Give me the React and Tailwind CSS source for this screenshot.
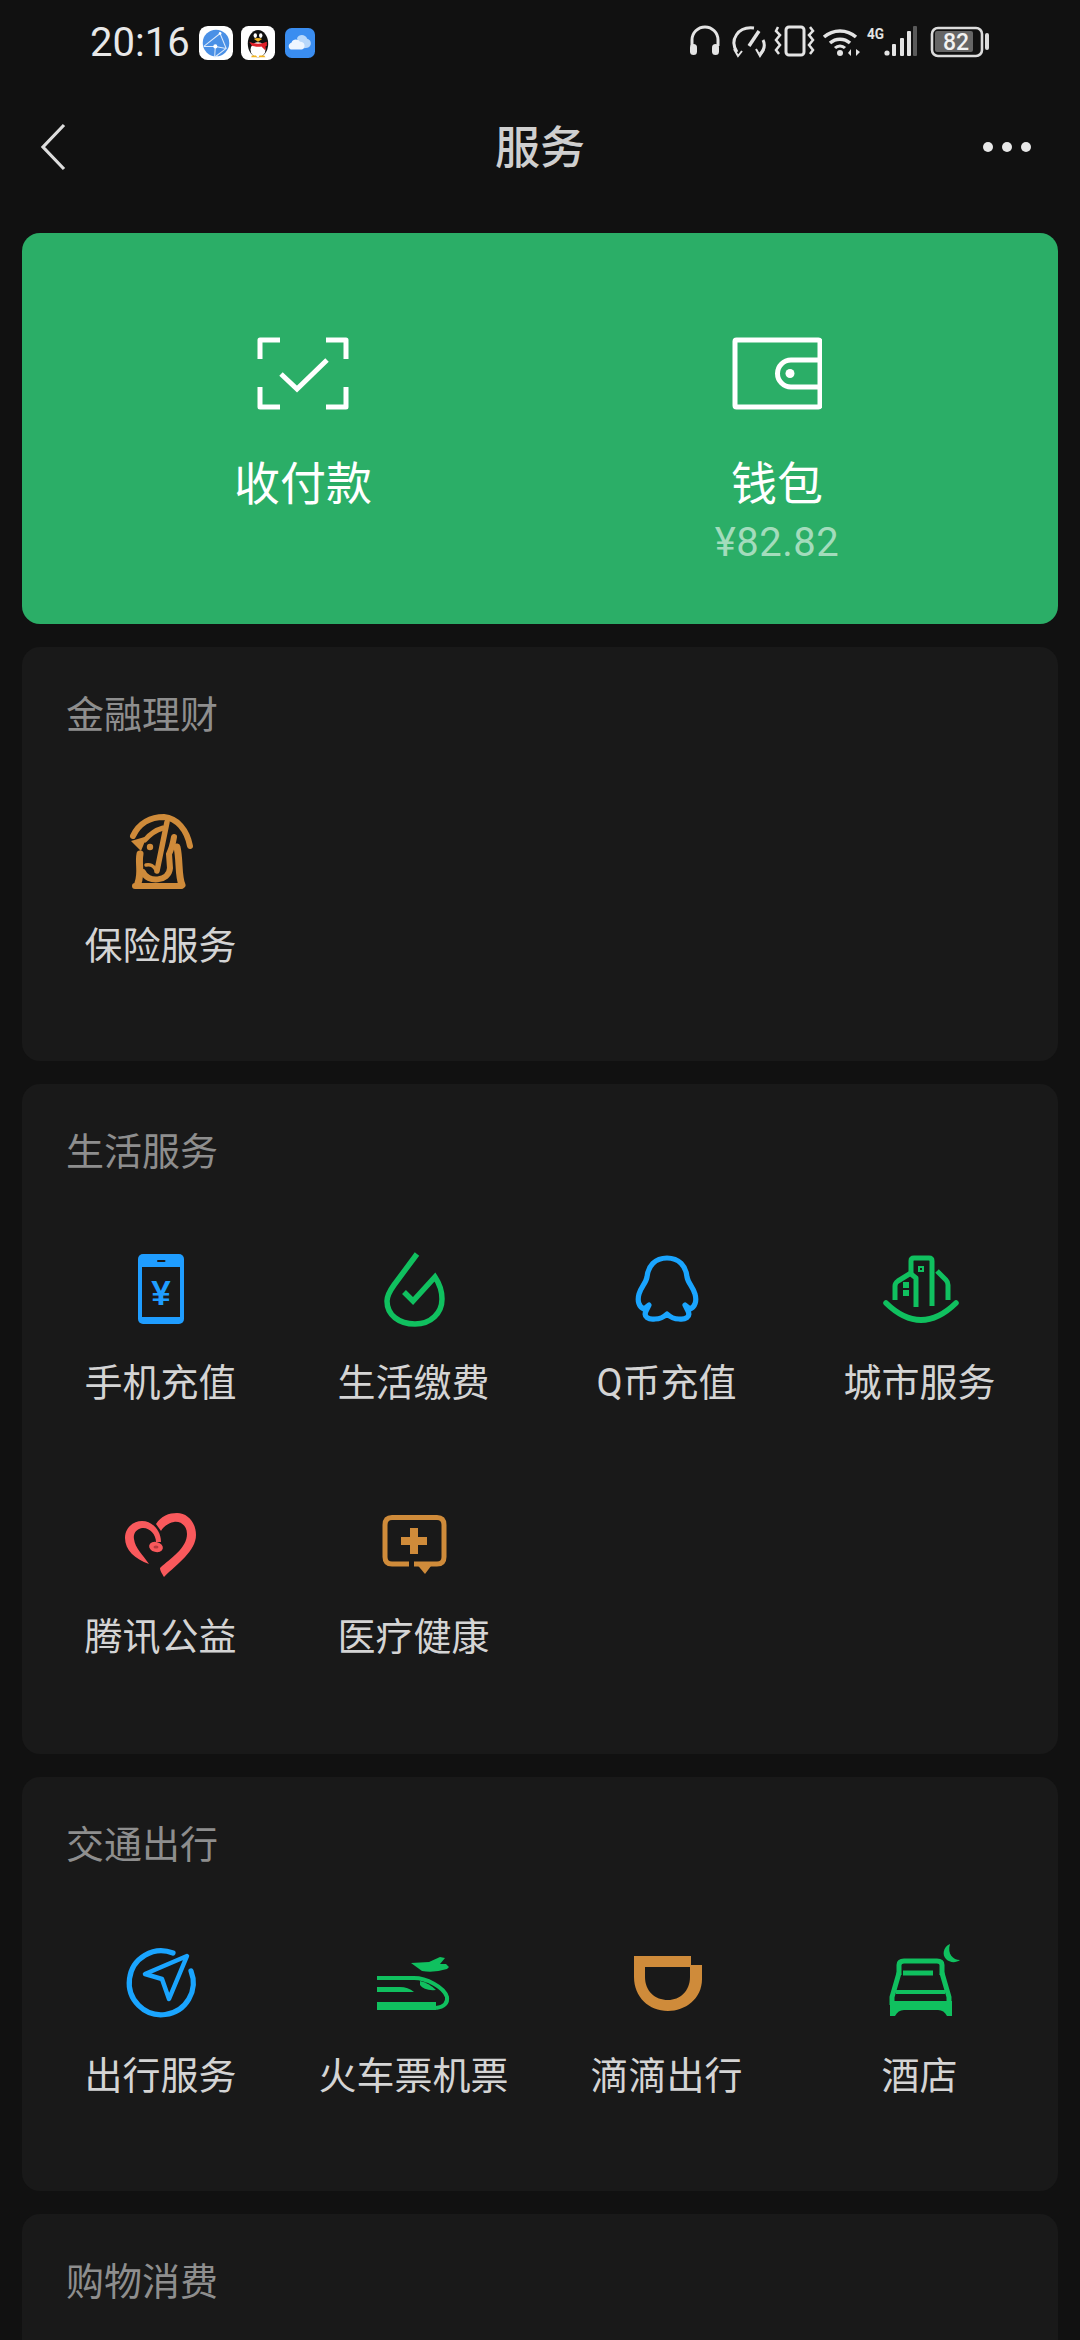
import React from "react";

const BLUE = "#1aa5ff";
const GREEN = "#10c05f";
const ORANGE = "#cf8b3a";
const RED = "#f9595c";

function IconBox({ children, dy = 0 }) {
  return (
    <svg width="80" height="80" viewBox="0 0 80 80" fill="none" className="overflow-visible">
      <g transform={`translate(0 ${dy})`}>{children}</g>
    </svg>
  );
}

function InsuranceIcon() {
  return (
    <IconBox dy={-1}>
      <g stroke={ORANGE} strokeWidth="6" strokeLinecap="round">
        <path d="M12 26 C18 13 30 7 43 7 C56 8 66 20 69 36" />
        <path d="M24 30 C29 24 35 20 42 18" strokeWidth="5" />
        <path d="M46 12 L36 61" strokeWidth="5.5" />
        <path d="M19 44 C17 54 21 62 17 73" strokeWidth="7" />
        <path d="M22 62 C26 73 48 72 49 58 L48 44 C51 38 52 33 53 27" />
        <path d="M56 37 C59 50 57 66 61 75" strokeWidth="7" />
        <path d="M14 76 H60" />
        <path d="M25 55 C29 54 33 56 35 60" strokeWidth="3.5" />
      </g>
      <path d="M10 31 L27 26 L24 31 L20 41 Z" fill={ORANGE} />
      <circle cx="29" cy="37" r="3.2" fill={ORANGE} />
    </IconBox>
  );
}

function PhoneIcon() {
  return (
    <IconBox dy={1}>
      <rect x="17" y="5" width="46" height="70" rx="5" fill="#1f9dff" />
      <rect x="21" y="18" width="38" height="50" fill="#191919" />
      <rect x="36" y="11" width="8.5" height="2" rx="1" fill="#191919" />
      <text x="40" y="56" textAnchor="middle" fontSize="35" fontWeight="700" fontFamily="Liberation Sans, sans-serif" fill="#1f9dff">
        ¥
      </text>
    </IconBox>
  );
}

function BillIcon() {
  return (
    <IconBox dy={1}>
      <path
        d="M43 5 L20 36 C15 43 13 48 13 52 C13 66 25 75 41 75 C57 75 68 64 68 50 C68 42 65 34 61 28 L39 52 L30 43"
        stroke={GREEN}
        strokeWidth="5.5"
      />
    </IconBox>
  );
}

function QCoinIcon() {
  return (
    <IconBox dy={1}>
      <path
        d="M40 9 C28 9 21 17 20 28 C19 34 14 38 12 45 C10 52 12 58 17 60 L22 56 L19 62 C16 68 22 71 28 70 C33 70 37 68 40 65 C43 68 47 70 52 70 C58 71 64 68 61 62 L58 56 L63 60 C68 58 70 52 68 45 C66 38 61 34 60 28 C59 17 52 9 40 9 Z"
        stroke={BLUE}
        strokeWidth="5.2"
        strokeLinejoin="round"
      />
    </IconBox>
  );
}

function CityIcon() {
  return (
    <IconBox dy={1}>
      <g stroke={GREEN} strokeWidth="5" strokeLinejoin="round">
        <path d="M6 54 Q41 88 76 54" strokeLinecap="round" strokeWidth="5.5" />
        <path d="M31 26 V12 Q31 9 34 9 H49 Q52 9 52 12 V57" />
        <path d="M31 25 L36 29 V58" />
        <path d="M31 24 L18 32 Q15 34 15 37 V51" />
        <path d="M57 22 L66 31 Q68 33 68 36 V51" />
      </g>
      <g fill={GREEN}>
        <path d="M38 17 H44 V23 H38 Z" />
        <rect x="23" y="33" width="6" height="6" />
        <rect x="23" y="41" width="6" height="6" />
      </g>
      <rect x="40" y="19" width="2" height="2" fill="#191919" />
    </IconBox>
  );
}

function CharityIcon() {
  return (
    <IconBox dy={2}>
      <g fill={RED}>
        <path d="M28 60 C14 55 4 46 4 34 C4 23 13 17 21 17 C31 17 40 26 40 38 L35 38 C35 30 28 23 21 24 C15 25 12 30 13 35 C14 44 22 51 28 60 Z" />
        <path d="M35 20 C40 12 48 9 56 9 C67 9 75 19 75 31 C75 47 56 60 43 73 C42 71 39 67 39 64 C50 54 66 44 66 30 C66 22 60 17 53 18 C47 19 42 23 40 27 Z" />
        <ellipse cx="35" cy="43" rx="7" ry="5" transform="rotate(15 35 43)" />
      </g>
      <ellipse cx="35" cy="43" rx="2.5" ry="1.5" fill="#b93a3d" />
    </IconBox>
  );
}

function MedicalIcon() {
  return (
    <IconBox dy={2}>
      <path
        d="M35 60 H18 Q11 60 11 53 V21 Q11 13.5 18 13.5 H63 Q70 13.5 70 21 V53 Q70 60 63 60 H40"
        stroke={ORANGE}
        strokeWidth="5"
      />
      <path d="M41 58 H60 L51 70 Z" fill={ORANGE} />
      <path d="M36 24 H44 V33 H53 V41 H44 V50 H36 V41 H27 V33 H36 Z" fill={ORANGE} />
    </IconBox>
  );
}

function TripIcon() {
  return (
    <IconBox dy={4}>
      <path d="M52 8 A32 32 0 1 0 70 26" stroke={BLUE} strokeWidth="5.2" strokeLinecap="round" />
      <path d="M66 11 L24 29 L41 34 L48 54 Z" stroke={BLUE} strokeWidth="4.5" strokeLinejoin="round" />
    </IconBox>
  );
}

function TicketIcon() {
  return (
    <IconBox dy={4}>
      <g fill={GREEN}>
        <path d="M37 18 L55 17 L66 12 L71 13 L66 19 L72 19 L75 22 L73 24 Q60 28 48 26 Z" />
        <path d="M3 42 H26 Q34 42 40 47 H3 Z" />
        <path d="M3 57 H62 V65 H3 Z" />
        <path d="M46 36 Q55 38 62 45 Q50 46 46 40 Z" />
      </g>
      <path d="M3 33 H40 C52 33 70 42 73 52 C74 58 70 62 62 63" stroke={GREEN} strokeWidth="4" />
    </IconBox>
  );
}

function DidiIcon() {
  return (
    <IconBox dy={4}>
      <path
        fillRule="evenodd"
        d="M7 11 H64 V20 H75 V34 C75 54 58 66 41 66 C22 66 7 52 7 32 Z M18 22 V32 C18 46 28 55 41 55 C53 55 63 46 63 32 V22 Z"
        fill={ORANGE}
      />
    </IconBox>
  );
}

function HotelIcon() {
  return (
    <IconBox dy={4}>
      <path d="M70 -1 C63 2 62 10 66 14 C70 18 76 18 80 15 C73 15 67 9 70 -1 Z" fill={GREEN} />
      <g stroke={GREEN} strokeWidth="5">
        <path d="M19 30 V20 Q19 16 24 16 H57 Q62 16 62 20 V30" />
        <path d="M19 28 L12 52 V60 M62 28 L69 52 V60" />
        <path d="M23 28 H53" />
        <path d="M16 47 H65" strokeWidth="4" />
      </g>
      <path d="M10 56 H72 V71 H67 Q64 65 58 65 H24 Q18 65 15 71 H10 Z" fill={GREEN} />
    </IconBox>
  );
}

function GlobeBadge() {
  return (
    <svg width="34" height="34" viewBox="0 0 100 100">
      <rect width="100" height="100" rx="26" fill="#fff" />
      <circle cx="50" cy="50" r="39" fill="#4a90e6" />
      <path d="M14 60 L62 22 L80 66 L46 92 M62 22 L14 60 M48 60 L80 66 M48 60 L46 92 M48 60 L14 60" stroke="#dbe9fb" strokeWidth="3" fill="none" />
      <circle cx="48" cy="60" r="6" fill="#fff" />
      <circle cx="62" cy="22" r="4" fill="#fff" />
    </svg>
  );
}

function PenguinBadge() {
  return (
    <svg width="34" height="34" viewBox="0 0 100 100">
      <rect width="100" height="100" rx="22" fill="#fff" />
      <ellipse cx="50" cy="52" rx="30" ry="40" fill="#111" />
      <ellipse cx="50" cy="70" rx="22" ry="22" fill="#fff" />
      <path d="M24 46 Q50 58 76 46 L76 58 L72 60 L72 72 L60 60 Q50 63 32 58 Z" fill="#e0202a" />
      <ellipse cx="42" cy="28" rx="5" ry="7" fill="#fff" />
      <ellipse cx="58" cy="28" rx="5" ry="7" fill="#fff" />
      <path d="M38 38 Q50 32 62 38 L50 46 Z" fill="#f2b31d" />
      <path d="M30 92 H48 L44 87 H32 Z M52 92 H72 L68 87 H54 Z" fill="#f2b31d" />
    </svg>
  );
}

function CloudBadge() {
  return (
    <svg width="30" height="30" viewBox="0 0 100 100">
      <rect width="100" height="100" rx="22" fill="#3a8df0" />
      <path d="M40 34 C46 20 68 20 74 36 C86 38 90 54 82 62 C78 68 60 68 50 66 Z" fill="#b8d8fb" />
      <path d="M24 72 C10 72 8 52 22 48 C26 36 44 36 50 46 C62 44 70 58 62 68 C58 72 52 72 46 72 Z" fill="#eef6ff" />
    </svg>
  );
}

// right part of the status bar, drawn as one strip
function StatusIcons() {
  return (
    <svg width="320" height="55" viewBox="0 0 320 55" fill="none">
      <g stroke="#e4e4e4" strokeWidth="3">
        <path d="M12 30 V24 a13 13 0 0 1 26 0 V30" />
        <rect x="10" y="28" width="7" height="11" rx="3.5" fill="#e4e4e4" strokeWidth="0" />
        <rect x="32" y="28" width="7" height="11" rx="3.5" fill="#e4e4e4" strokeWidth="0" />
        <path d="M57 36 C49 24 58 10 74 12" />
        <path d="M83 24 C86 30 84 34 80 38" />
        <path d="M79 15 L69 30" strokeWidth="3.5" />
        <path d="M54 33 L58 40 L62 35 M76 33 L80 40 L84 34" strokeWidth="2" />
        <rect x="106" y="11" width="18" height="28" rx="3" />
        <path d="M98 11 L96 15 L100 19 L96 24 L100 29 L96 34 L99 38" strokeWidth="2.5" />
        <path d="M130 11 L133 15 L129 19 L133 24 L129 29 L133 34 L130 38" strokeWidth="2.5" />
        <path d="M144 21 A24 24 0 0 1 176 21" strokeWidth="3.5" />
        <path d="M150 27 A15 15 0 0 1 170 27" strokeWidth="3.5" />
        <path d="M155 32 A7 7 0 0 1 165 32" strokeWidth="3" />
      </g>
      <circle cx="160" cy="37" r="3" fill="#e4e4e4" />
      <path d="M171 40 L171 33 L168 37 Z M176 33 L176 40 L180 36 Z" fill="#e4e4e4" />
      <text x="187" y="23" fontSize="14.5" fontWeight="700" fontFamily="Roboto, sans-serif" fill="#e4e4e4" textLength="17" lengthAdjust="spacingAndGlyphs">
        4G
      </text>
      <circle cx="207" cy="37" r="2.6" fill="#e4e4e4" />
      <rect x="212" y="28" width="4" height="12" rx="1" fill="#e4e4e4" />
      <rect x="220" y="22" width="4" height="18" rx="1" fill="#e4e4e4" />
      <rect x="227" y="15" width="4" height="25" rx="1" fill="#e4e4e4" />
      <rect x="233" y="10" width="4" height="30" rx="1" fill="#5a5a5a" />
      <rect x="252" y="12" width="50" height="28" rx="6" stroke="#dcdcdc" strokeWidth="2.6" />
      <rect x="255" y="15" width="38" height="21" rx="2" fill="#666" />
      <text x="276" y="33.5" textAnchor="middle" fontSize="23" fontWeight="500" fontFamily="Roboto, sans-serif" fill="#f2f2f2">
        82
      </text>
      <rect x="305" y="17" width="4" height="17" rx="2" fill="#dcdcdc" />
    </svg>
  );
}

function ScanIcon() {
  return (
    <svg width="92" height="73" viewBox="0 0 92 73" fill="none" stroke="#fff" strokeWidth="5">
      <path d="M23 3 H3 V22 M69 3 H89 V22 M3 50 V70 H23 M89 50 V70 H69" strokeLinejoin="round" />
      <path d="M24 37 L40 52 L70 23" />
    </svg>
  );
}

function WalletIcon() {
  return (
    <svg width="90" height="73" viewBox="0 0 90 73" fill="none" stroke="#fff" strokeWidth="5" strokeLinejoin="round">
      <rect x="3" y="3" width="85" height="67" rx="1.5" />
      <path d="M87 23 H59 a13.5 13.5 0 0 0 0 27 H87" />
      <circle cx="58" cy="36.5" r="4.5" fill="#fff" stroke="none" />
    </svg>
  );
}

const sections = [
  {
    title: "金融理财",
    height: "h-[414px]",
    items: [{ label: "保险服务", icon: InsuranceIcon }],
  },
  {
    title: "生活服务",
    height: "h-[670px]",
    items: [
      { label: "手机充值", icon: PhoneIcon },
      { label: "生活缴费", icon: BillIcon },
      { label: "Q币充值", icon: QCoinIcon },
      { label: "城市服务", icon: CityIcon },
      { label: "腾讯公益", icon: CharityIcon },
      { label: "医疗健康", icon: MedicalIcon },
    ],
  },
  {
    title: "交通出行",
    height: "h-[414px]",
    items: [
      { label: "出行服务", icon: TripIcon },
      { label: "火车票机票", icon: TicketIcon },
      { label: "滴滴出行", icon: DidiIcon },
      { label: "酒店", icon: HotelIcon },
    ],
  },
  { title: "购物消费", height: "h-[300px]", items: [] },
];

function Section({ title, height, items }) {
  return (
    <section className={`${height} shrink-0 rounded-[18px] bg-[#191919] pt-[45px] px-3`}>
      <h2 className="pl-8 text-[38px] leading-[46px] font-normal text-[#8e8e8e]">{title}</h2>
      <div className="mt-[24px] grid grid-cols-4 auto-rows-[254px]">
        {items.map((item) => {
          const Icon = item.icon;
          return (
            <div key={item.label} className="flex flex-col items-center pt-[49px]">
              <Icon />
              <span className="mt-[32px] text-[38px] leading-[46px] text-[#d4d4d4] whitespace-nowrap">{item.label}</span>
            </div>
          );
        })}
      </div>
    </section>
  );
}

export default function App() {
  return (
    <div className="h-[2340px] w-[1080px] overflow-hidden bg-[#111111] font-['Roboto','Noto_Sans_CJK_SC',sans-serif]">
      {/* Status bar */}
      <div className="flex h-[86px] items-center justify-between pl-[90px] pr-[80px]">
        <div className="flex items-center">
          <span className="text-[40px] font-normal leading-none text-[#e8e8e8]">20:16</span>
          <div className="ml-[9px] flex items-center gap-2">
            <GlobeBadge />
            <PenguinBadge />
            <span className="ml-[2px] flex">
              <CloudBadge />
            </span>
          </div>
        </div>
        <StatusIcons />
      </div>

      {/* Nav bar */}
      <div className="mb-[25px] grid h-[122px] grid-cols-3 items-center pl-[40px] pr-[49px]">
        <svg width="26" height="48" viewBox="0 0 26 48" fill="none" stroke="#dddddd" strokeWidth="3.2">
          <path d="M24 2 L3 24 L24 46" />
        </svg>
        <h1 className="pl-[9px] pt-[2px] text-center text-[45px] font-medium leading-none text-[#cfcfcf]">服务</h1>
        <div className="flex items-center justify-end gap-[9px]">
          <span className="h-[10px] w-[10px] rounded-full bg-[#e8e8e8]" />
          <span className="h-[10px] w-[10px] rounded-full bg-[#e8e8e8]" />
          <span className="h-[10px] w-[10px] rounded-full bg-[#e8e8e8]" />
        </div>
      </div>

      <div className="flex flex-col gap-[23px] px-[22px]">
        {/* Pay and wallet */}
        <div className="grid h-[391px] grid-cols-2 rounded-[18px] bg-[#2bae67] px-11 pt-[104px]">
          <div className="flex flex-col items-center">
            <ScanIcon />
            <span className="mt-[47px] text-[46px] leading-[54px] text-white">收付款</span>
          </div>
          <div className="flex flex-col items-center">
            <WalletIcon />
            <span className="mt-[47px] text-[46px] leading-[54px] text-white">钱包</span>
            <span className="mt-[10px] text-[40px] leading-[44px] tracking-[0.5px] text-[#a3dcbc]">¥82.82</span>
          </div>
        </div>

        {sections.map((section) => (
          <Section key={section.title} {...section} />
        ))}
      </div>
    </div>
  );
}
